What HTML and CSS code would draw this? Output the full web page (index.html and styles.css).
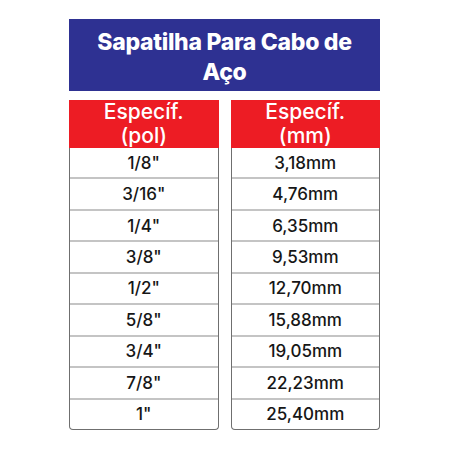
FILE: index.html
```html
<!DOCTYPE html>
<html>
<head>
<meta charset="utf-8">
<link rel="stylesheet" href="styles.css">
</head>
<body>
<div class="wrap">
  <div class="title">Sapatilha Para Cabo de<br>Aço</div>
  <div class="cols">
    <div class="col">
      <div class="head">Específ.<br>(pol)</div>
      <div class="body">
        <div class="cell">1/8"</div>
        <div class="cell">3/16"</div>
        <div class="cell">1/4"</div>
        <div class="cell">3/8"</div>
        <div class="cell">1/2"</div>
        <div class="cell">5/8"</div>
        <div class="cell">3/4"</div>
        <div class="cell">7/8"</div>
        <div class="cell">1"</div>
      </div>
    </div>
    <div class="col">
      <div class="head">Específ.<br>(mm)</div>
      <div class="body">
        <div class="cell">3,18mm</div>
        <div class="cell">4,76mm</div>
        <div class="cell">6,35mm</div>
        <div class="cell">9,53mm</div>
        <div class="cell">12,70mm</div>
        <div class="cell">15,88mm</div>
        <div class="cell">19,05mm</div>
        <div class="cell">22,23mm</div>
        <div class="cell">25,40mm</div>
      </div>
    </div>
  </div>
</div>
</body>
</html>
```
FILE: styles.css
```css
html, body {
  margin: 0;
  padding: 0;
  background: #fff;
}
body {
  width: 450px;
  height: 450px;
  overflow: hidden;
  font-family: "Inter", "Liberation Sans", sans-serif;
}
.wrap {
  margin: 19px 0 0 69px;
  width: 311px;
}
.title {
  background: #2e3192;
  color: #fff;
  height: 72px;
  box-sizing: border-box;
  padding-top: 8px;
  text-align: center;
  font-weight: 800;
  font-size: 23px;
  line-height: 30px;
  letter-spacing: -0.3px;
}
.cols {
  display: flex;
  gap: 12px;
  margin-top: 9px;
}
.col {
  flex: 1;
  display: flex;
  flex-direction: column;
}
.head {
  background: #ed1c24;
  color: #fff;
  height: 48px;
  box-sizing: border-box;
  padding-top: 0;
  text-align: center;
  font-weight: 500;
  font-size: 21px;
  line-height: 24px;
}
.body {
  border: 1.5px solid #6f6f6f;
  border-top: none;
  border-radius: 0 0 4px 4px;
  height: 282px;
  box-sizing: border-box;
  display: flex;
  flex-direction: column;
}
.cell {
  flex: 1;
  display: flex;
  align-items: center;
  justify-content: center;
  color: #161616;
  font-weight: 500;
  font-size: 17px;
  border-bottom: 2px solid #c4c4c4;
}
.cell:last-child {
  border-bottom: none;
}
```
